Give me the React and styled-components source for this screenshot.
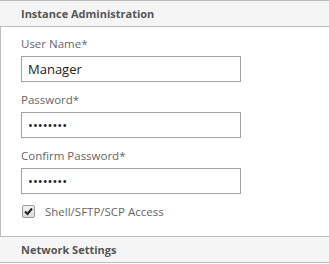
import React from 'react';
import styled, { createGlobalStyle } from 'styled-components';

const GlobalStyle = createGlobalStyle`
  body {
    margin: 0;
    background: #ffffff;
    font-family: "Open Sans", "Noto Sans", sans-serif;
  }
`;

const Panel = styled.div`
  width: 329px;
  display: flex;
  flex-direction: column;
`;

const SectionHeader = styled.div`
  height: 25px;
  border-top: 1px solid #bdbdbd;
  border-bottom: 1px solid #bdbdbd;
  background: #f5f5f5;
  padding-left: 21px;
  display: flex;
  align-items: center;
  font-size: 11px;
  font-weight: bold;
  color: #555555;
`;

const Content = styled.div`
  border-left: 1px solid #bdbdbd;
  padding: 9px 0 17px 20px;
  display: flex;
  flex-direction: column;
`;

const Field = styled.div`
  display: flex;
  flex-direction: column;
  margin-bottom: 10px;
`;

const Label = styled.label`
  font-size: 11.5px;
  line-height: 16px;
  color: #666666;
  margin-bottom: 4px;
`;

const Input = styled.input`
  box-sizing: border-box;
  width: 220px;
  height: 26px;
  border: 1px solid #a3a3a3;
  padding: 0 6px;
  font-family: "Open Sans", "Noto Sans", sans-serif;
  font-size: 13px;
  color: #222222;
  outline: none;
  background: #ffffff;
`;

const CheckRow = styled.div`
  display: flex;
  align-items: center;
  gap: 10px;
  height: 16px;
  margin-top: -1px;
  padding-left: 1px;
`;

const Box = styled.span`
  box-sizing: border-box;
  width: 13px;
  height: 13px;
  border: 1px solid #9a9a9a;
  border-radius: 2px;
  background: linear-gradient(#f4f4f4, #dcdcdc);
  display: flex;
  align-items: center;
  justify-content: center;
`;

const CheckText = styled.span`
  font-size: 11.5px;
  color: #666666;
`;

const TextField = ({ label, type, value }) => (
  <Field>
    <Label>{label}</Label>
    <Input type={type} defaultValue={value} />
  </Field>
);

const App = () => (
  <Panel>
    <GlobalStyle />
    <SectionHeader>Instance Administration</SectionHeader>
    <Content>
      <TextField label="User Name*" type="text" value="Manager" />
      <TextField label="Password*" type="password" value="password" />
      <TextField label="Confirm Password*" type="password" value="password" />
      <CheckRow>
        <Box>
          <svg width="9" height="9" viewBox="0 0 9 9">
            <path d="M1 4.5 L3.5 7 L8 1.5" fill="none" stroke="#222" strokeWidth="2" />
          </svg>
        </Box>
        <CheckText>Shell/SFTP/SCP Access</CheckText>
      </CheckRow>
    </Content>
    <SectionHeader>Network Settings</SectionHeader>
  </Panel>
);

export default App;
